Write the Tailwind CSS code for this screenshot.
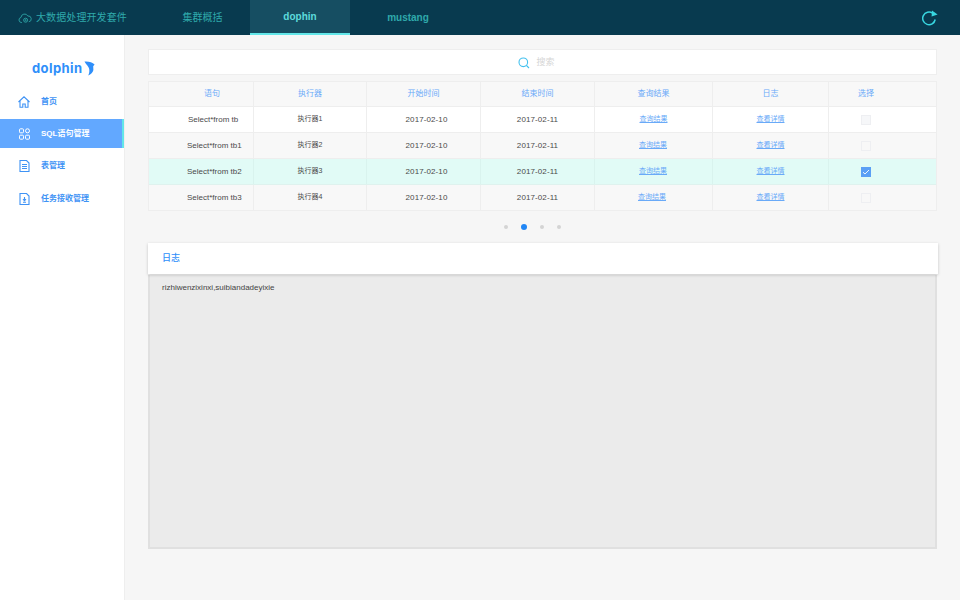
<!DOCTYPE html>
<html lang="zh-CN">
<head>
  <meta charset="UTF-8">
  <title>dolphin</title>
  <script src="https://cdn.jsdelivr.net/npm/@tailwindcss/browser@4"></script>
</head>
<body class="w-[960px] h-[600px] overflow-hidden bg-[#f6f6f6] font-['Liberation_Sans','Noto_Sans_CJK_SC',sans-serif]">
  <!-- top bar -->
  <header class="h-[35px] bg-[#083a4f] flex items-stretch text-[#2fa9ab]">
    <div class="w-[155px] pl-[18px] flex items-center gap-[4px] text-[10px] tracking-[0.1px]">
      <svg class="w-[14px] h-[14px]" viewBox="0 0 14 14" fill="none" stroke="#2a9a9e" stroke-width="1">
        <path d="M4 11.5H3.2A2.6 2.6 0 0 1 3 6.4 3.6 3.6 0 0 1 9.8 5a2.9 2.9 0 0 1 1 5.8"/>
        <circle cx="7.6" cy="9.2" r="2"/>
        <circle cx="7.6" cy="9.2" r="0.6"/>
      </svg>
      <span class="whitespace-nowrap">大数据处理开发套件</span>
    </div>
    <div class="w-[95px] flex items-center justify-center text-[10px]">集群概括</div>
    <div class="w-[100px] flex items-center justify-center text-[10px] font-bold text-[#5ddbdc] bg-[#164e62] border-b-2 border-[#62e6e8]">dophin</div>
    <div class="w-[116px] flex items-center justify-center text-[10px] font-bold">mustang</div>
    <div class="ml-auto w-[60px] flex items-center pl-[22px] pt-[1px]">
      <svg class="w-[16px] h-[16px]" viewBox="0 0 16 16" fill="none">
        <path d="M10.6 3.2A6.3 6.3 0 1 0 13.2 9.5" stroke="#38d6e0" stroke-width="1.5"/>
        <path d="M10 0.4 15.6 4.6 9.6 6.6Z" fill="#38d6e0"/>
      </svg>
    </div>
  </header>

  <div class="flex h-[565px]">
    <!-- sidebar -->
    <aside class="w-[125px] bg-white border-r border-[#eeeeee] text-[8px] text-[#3f93f5]">
      <div class="h-[54px] pt-[25px] pl-[32px] flex items-start">
        <span class="font-['Inter',sans-serif] font-bold text-[13px] leading-[16px] text-[#2f8ffa] tracking-[0.4px]">dolphin</span>
        <svg class="w-[11px] h-[15px] mt-[1px] ml-[2px]" viewBox="0 0 11 15" fill="#2f8ffa">
          <path d="M0.5 0.5C4.5 0.2 8.5 1 10.6 3.5L9.2 5.2 9.4 9C8.8 11.5 7 13.5 4.2 14.5 5.6 12 6 8 4 5.5 3 4 1.6 2.5 0.5 0.5Z"/>
        </svg>
      </div>
      <nav class="flex flex-col font-bold">
        <a class="h-[26px] pl-[18px] flex items-center gap-[11px]">
          <svg class="w-[12px] h-[12px]" viewBox="0 0 12 12" fill="none" stroke="#3f93f5" stroke-width="1.1"><path d="M0.5 6 6 0.8 11.5 6M2 5v6.3h2.8V8h2.4v3.3H10V5"/></svg>
          <span>首页</span>
        </a>
        <a class="mt-[4px] h-[29px] pl-[19px] flex items-center gap-[11px] bg-[#62a8ff] border-r-2 border-[#62e6e8] text-white">
          <svg class="w-[11px] h-[12px]" viewBox="0 0 11 12" fill="none" stroke="#ffffff" stroke-width="1"><rect x="0.5" y="0.8" width="4" height="4" rx="1"/><circle cx="8.5" cy="2.8" r="2"/><rect x="0.5" y="7.2" width="4" height="4" rx="1"/><rect x="6.5" y="7.2" width="4" height="4" rx="1"/></svg>
          <span>SQL语句管理</span>
        </a>
        <a class="mt-[4px] h-[27px] pl-[19px] flex items-center gap-[11px]">
          <svg class="w-[11px] h-[12px]" viewBox="0 0 11 12" fill="none" stroke="#3f93f5" stroke-width="1.1"><path d="M1 0.5h6.5L10 3v8.5H1ZM3 4.5h5M3 6.5h5M3 8.5h5"/></svg>
          <span>表管理</span>
        </a>
        <a class="mt-[6px] h-[27px] pl-[19px] flex items-center gap-[11px]">
          <svg class="w-[11px] h-[12px]" viewBox="0 0 11 12" fill="none" stroke="#3f93f5" stroke-width="1.1"><path d="M1 0.5h6.5L10 3v8.5H1ZM5.5 4v3.5M4 6.2l1.5 1.6L7 6.2M4 9.2h3"/></svg>
          <span>任务接收管理</span>
        </a>
      </nav>
    </aside>

    <!-- main -->
    <main class="w-[812px] pl-[23px] pt-[14px] text-[8px] text-[#4a4a4a]">
      <div class="w-[789px] h-[26px] bg-white border border-[#eeeeee] flex items-center justify-center gap-[6px] pr-[12px] pt-[1px] text-[#d5d5d5] text-[9px]">
        <svg class="w-[12px] h-[12px]" viewBox="0 0 12 12" fill="none" stroke="#42c0ee" stroke-width="1.1"><circle cx="5.3" cy="5.3" r="4.3"/><path d="M8.5 8.5 11 11"/></svg>
        <span>搜索</span>
      </div>

      <!-- table -->
      <div class="mt-[6px] w-[789px] border border-[#eeeeee] bg-[#f8f8f8]">
        <div class="h-[25px] grid grid-cols-[105px_113px_114px_114px_118px_116px_107px] items-stretch border-b border-[#eeeeee] text-[#69aaf8]">
          <div class="flex items-center justify-center border-r border-[#eeeeee] pl-[22px]">语句</div>
          <div class="flex items-center justify-center border-r border-[#eeeeee]">执行器</div>
          <div class="flex items-center justify-center border-r border-[#eeeeee]">开始时间</div>
          <div class="flex items-center justify-center border-r border-[#eeeeee]">结束时间</div>
          <div class="flex items-center justify-center border-r border-[#eeeeee]">查询结果</div>
          <div class="flex items-center justify-center border-r border-[#eeeeee]">日志</div>
          <div class="flex items-center justify-center pr-[33px]">选择</div>
        </div>

        <div class="h-[26px] bg-white grid grid-cols-[105px_113px_114px_114px_118px_116px_107px] items-stretch border-b border-[#eeeeee]">
          <div class="flex items-center border-r border-[#eeeeee] pl-[39px]">Select*from tb</div>
          <div class="flex items-center justify-center border-r border-[#eeeeee] text-[7px]">执行器1</div>
          <div class="flex items-center justify-center border-r border-[#eeeeee] pl-[6px] tracking-[0.1px]">2017-02-10</div>
          <div class="flex items-center justify-center border-r border-[#eeeeee] tracking-[0.1px]">2017-02-11</div>
          <div class="flex items-center justify-center border-r border-[#eeeeee] text-[7px] text-[#69aaf8] underline">查询结果</div>
          <div class="flex items-center justify-center border-r border-[#eeeeee] text-[7px] text-[#69aaf8] underline">查看详情</div>
          <div class="flex items-center justify-center pr-[33px]"><span class="w-[10px] h-[10px] bg-[#f6f7f9] border border-[#eeeff2]"></span></div>
        </div>

        <div class="h-[26px] grid grid-cols-[105px_113px_114px_114px_118px_116px_107px] items-stretch border-b border-[#eeeeee]">
          <div class="flex items-center border-r border-[#eeeeee] pl-[38px]">Select*from tb1</div>
          <div class="flex items-center justify-center border-r border-[#eeeeee] text-[7px]">执行器2</div>
          <div class="flex items-center justify-center border-r border-[#eeeeee] pl-[6px] tracking-[0.1px]">2017-02-10</div>
          <div class="flex items-center justify-center border-r border-[#eeeeee] tracking-[0.1px]">2017-02-11</div>
          <div class="flex items-center justify-center border-r border-[#eeeeee] text-[7px] pr-[1px] text-[#69aaf8] underline">查询结果</div>
          <div class="flex items-center justify-center border-r border-[#eeeeee] text-[7px] text-[#69aaf8] underline">查看详情</div>
          <div class="flex items-center justify-center pr-[33px]"><span class="w-[10px] h-[10px] bg-[#f8f8f8] border border-[#eeeff2]"></span></div>
        </div>

        <div class="h-[26px] bg-[#e1fbf6] grid grid-cols-[105px_113px_114px_114px_118px_116px_107px] items-stretch border-b border-[#dff2ee]">
          <div class="flex items-center border-r border-[#d9f3ee] pl-[38px]">Select*from tb2</div>
          <div class="flex items-center justify-center border-r border-[#d9f3ee] text-[7px]">执行器3</div>
          <div class="flex items-center justify-center border-r border-[#d9f3ee] pl-[6px] tracking-[0.1px]">2017-02-10</div>
          <div class="flex items-center justify-center border-r border-[#d9f3ee] tracking-[0.1px]">2017-02-11</div>
          <div class="flex items-center justify-center border-r border-[#d9f3ee] text-[7px] pr-[1px] text-[#69aaf8] underline">查询结果</div>
          <div class="flex items-center justify-center border-r border-[#d9f3ee] text-[7px] text-[#69aaf8] underline">查看详情</div>
          <div class="flex items-center justify-center pr-[33px]">
            <span class="w-[10px] h-[10px] bg-[#5a9ff5] flex items-center justify-center">
              <svg class="w-[8px] h-[8px]" viewBox="0 0 8 8" fill="none" stroke="#ffffff" stroke-width="0.9"><path d="M1 4.2 3 6 7 2"/></svg>
            </span>
          </div>
        </div>

        <div class="h-[25px] grid grid-cols-[105px_113px_114px_114px_118px_116px_107px] items-stretch">
          <div class="flex items-center border-r border-[#eeeeee] pl-[38px]">Select*from tb3</div>
          <div class="flex items-center justify-center border-r border-[#eeeeee] text-[7px]">执行器4</div>
          <div class="flex items-center justify-center border-r border-[#eeeeee] pl-[6px] tracking-[0.1px]">2017-02-10</div>
          <div class="flex items-center justify-center border-r border-[#eeeeee] tracking-[0.1px]">2017-02-11</div>
          <div class="flex items-center justify-center border-r border-[#eeeeee] text-[7px] pr-[3px] text-[#69aaf8] underline">查询结果</div>
          <div class="flex items-center justify-center border-r border-[#eeeeee] text-[7px] text-[#69aaf8] underline">查看详情</div>
          <div class="flex items-center justify-center pr-[33px]"><span class="w-[10px] h-[10px] bg-[#f8f8f8] border border-[#eeeff2]"></span></div>
        </div>
      </div>

      <!-- pager -->
      <div class="w-[789px] h-[32px] flex items-center justify-center pr-[21px] gap-[13px]">
        <span class="w-[4px] h-[4px] rounded-full bg-[#d4d4d4]"></span>
        <span class="w-[6px] h-[6px] rounded-full bg-[#2186f5]"></span>
        <span class="w-[4px] h-[4px] rounded-full bg-[#d4d4d4]"></span>
        <span class="w-[4px] h-[4px] rounded-full bg-[#d4d4d4]"></span>
      </div>

      <!-- log -->
      <section class="w-[790px]">
        <div class="h-[31px] bg-white pl-[14px] flex items-center text-[9px] font-medium text-[#2f8ffa] shadow-[0_1px_3px_rgba(0,0,0,0.2)] relative">日志</div>
        <div class="h-[274px] w-[789px] mt-[1px] bg-[#ebebeb] border-2 border-t-0 border-[#e0e0e0] pl-[12px] pt-[7px] text-[#444444]">rizhiwenzixinxi,suibiandadeyixie</div>
      </section>
    </main>
  </div>
</body>
</html>
